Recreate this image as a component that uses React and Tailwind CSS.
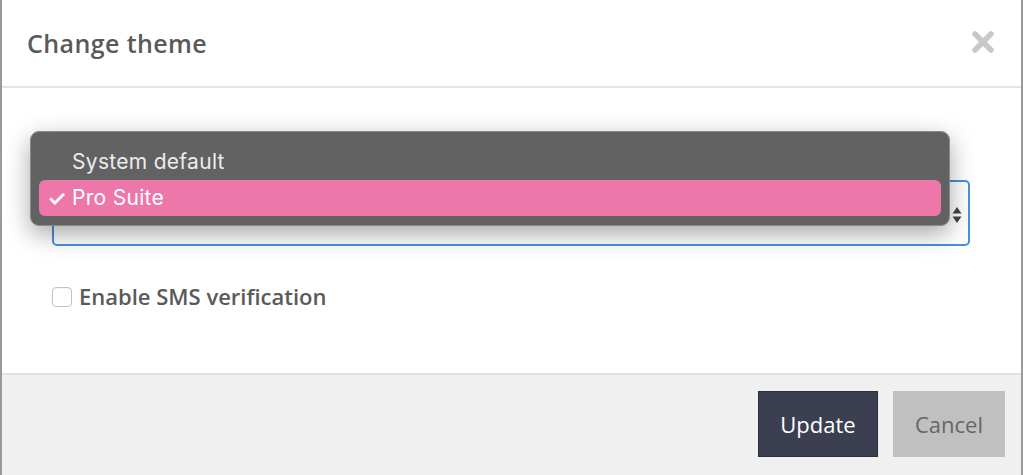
import React from 'react';

const App = () => {
  return (
    <div className="w-[1023px] h-[475px] bg-white flex overflow-hidden" style={{ fontFamily: '"Open Sans", sans-serif' }}>
      <div className="flex-1 flex flex-col border-l-2 border-r-2 border-[#9a9a9a] bg-white">
        {/* header */}
        <div className="h-[88px] flex items-center justify-between pl-[25px] pr-[26px] border-b-2 border-[#e5e5e5]">
          <h2 className="text-[25px] font-semibold text-[#5a5a5a] tracking-[0.4px] mt-[1px]">Change theme</h2>
          <button className="text-[#c8c8c8] mb-[2px]">
            <svg width="24" height="24" viewBox="0 0 24 24">
              <path d="M4 4 L20 20 M20 4 L4 20" stroke="currentColor" strokeWidth="5.5" strokeLinecap="round" />
            </svg>
          </button>
        </div>

        {/* body */}
        <div className="flex-1 relative pl-[50px] pr-[50px] pt-[92px]">
          <div className="h-[66px] w-[918px] border-2 border-[#4a90d9] rounded-[5px] flex items-center justify-end pr-[6px]">
            <svg width="10" height="18" viewBox="0 0 10 18" className="mt-[4px]">
              <path d="M5 1 L9.5 7.5 H0.5 Z M5 17 L9.5 10.5 H0.5 Z" fill="#444" />
            </svg>
          </div>

          <label className="flex items-center gap-[7px] mt-[34px]">
            <span className="w-[20px] h-[20px] rounded-[4px] border border-[#c4c4c4] bg-white shadow-[inset_0_1px_1px_rgba(0,0,0,0.05)]"></span>
            <span className="text-[22px] font-semibold text-[#5a5a5a]">Enable SMS verification</span>
          </label>

          {/* open native dropdown */}
          <div
            className="absolute left-[28px] top-[43px] w-[920px] h-[95px] rounded-[9px] bg-[#626262] border border-[#8a8a8a] shadow-[0_8px_24px_rgba(0,0,0,0.35)] px-[8px] pt-[15px]"
            style={{ fontFamily: 'Inter, "Liberation Sans", sans-serif' }}
          >
            <div className="h-[30px] flex items-center pl-[33px] text-[21px] tracking-[0.3px] text-[#ececec]">System default</div>
            <div className="h-[36px] mt-[3px] rounded-[6px] bg-[#ec77a8] flex items-center text-[21px] tracking-[0.3px] text-white">
              <span className="w-[33px] pl-[8px] text-[22px] font-semibold">✓</span>
              <span>Pro Suite</span>
            </div>
          </div>
        </div>

        {/* footer */}
        <div className="h-[102px] bg-[#f0f0f0] border-t-2 border-[#e2e2e2] flex items-start justify-end gap-[15px] pt-[16px] pr-[16px]">
          <button className="w-[120px] h-[66px] bg-[#3c3f51] text-white text-[22px] border border-[#2c2e3b]">Update</button>
          <button className="w-[112px] h-[66px] bg-[#c0c0c0] text-[#666] text-[22px]">Cancel</button>
        </div>
      </div>
    </div>
  );
};

export default App;
